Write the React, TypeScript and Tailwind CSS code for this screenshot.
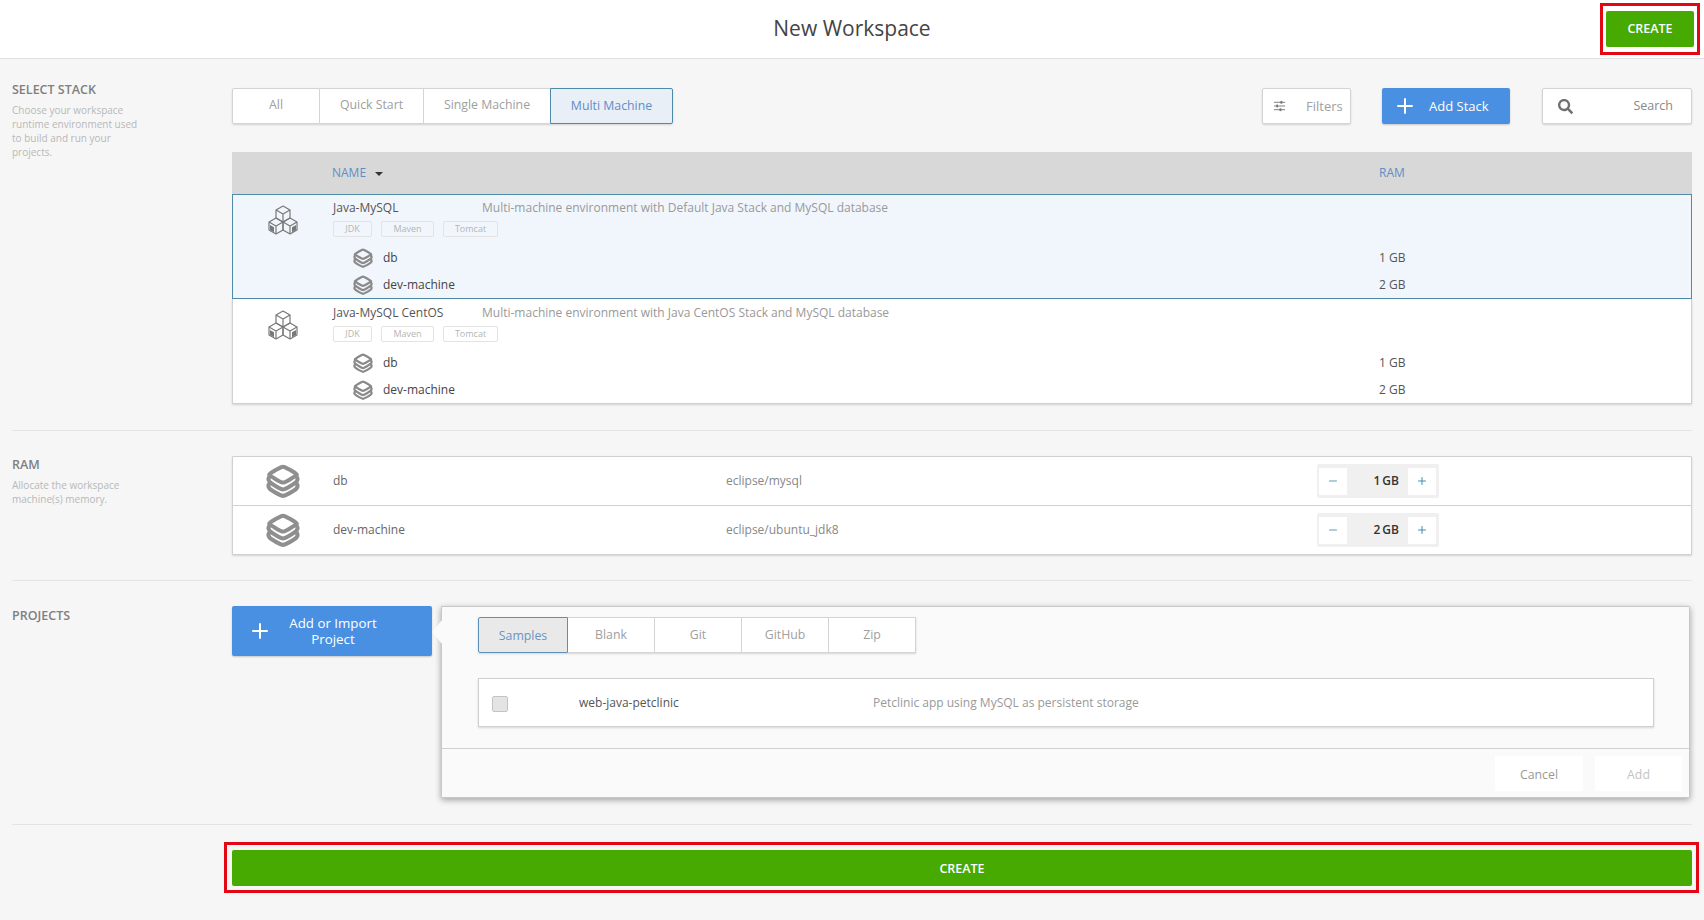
import { Plus, Minus } from "lucide-react";
import { FaSearch } from "react-icons/fa";

const CubesIcon = () => (
  <svg viewBox="0 0 32 32" className="w-[32px] h-[32px] text-[#787878]" fill="none" stroke="currentColor" strokeWidth="1.200" strokeLinejoin="round">
    <path d="M16 2l7 4v8l-7 4-7-4V6z" />
    <path d="M9 6l7 4 7-4M16 10v8" />
    <path d="M9 14l7 4v8l-7 4-7-4v-8z" />
    <path d="M2 18l7 4 7-4M9 22v8" />
    <path d="M23 14l7 4v8l-7 4-7-4v-8z" />
    <path d="M16 18l7 4 7-4M23 22v8" />
    <path d="M3 21l4 2.300v5l-4-2.300zM29 21l-4 2.300v5l4-2.300z" fill="currentColor" stroke="none" />
  </svg>
);

const StackIcon = ({ big }: { big?: boolean }) => (
  <svg viewBox="0 0 32 32" className={big ? "w-[34px] h-[34px] text-[#8f8f8f]" : "w-[20px] h-[20px] text-[#8a8a8a]"} fill="none" stroke="currentColor" strokeWidth={big ? 3.8 : 3.6} strokeLinejoin="round" strokeLinecap="round">
    <path d="M16 2.500C18 2.500 27 8 29 10C27 12 18 17.500 16 17.500C14 17.500 5 12 3 10C5 8 14 2.500 16 2.500z" />
    <path d="M3.500 11.500C1.800 13.500 1.800 15 3.500 16.800C5.500 18.800 14 24 16 24C18 24 26.500 18.800 28.500 16.800C30.200 15 30.200 13.500 28.500 11.500" />
    <path d="M3.500 18C1.800 20 1.800 21.500 3.500 23.300C5.500 25.300 14 30 16 30C18 30 26.500 25.300 28.500 23.300C30.200 21.500 30.200 20 28.500 18" />
  </svg>
);

const FilterIcon = () => (
  <svg viewBox="0 0 14 12" className="w-[13px] h-[12px] text-[#777]" fill="currentColor">
    <rect x="1" y="1.500" width="12" height="1" />
    <rect x="1" y="5.500" width="12" height="1" />
    <rect x="1" y="9.500" width="12" height="1" />
    <rect x="8" y="0.500" width="2" height="3" />
    <rect x="3.500" y="4.500" width="2" height="3" />
    <rect x="7" y="8.500" width="2" height="3" />
  </svg>
);

const stackTabs = [
  { label: "All", w: "w-[88px]" },
  { label: "Quick Start", w: "w-[104px]" },
  { label: "Single Machine", w: "w-[127px]" },
];

const sourceTabs = ["Blank", "Git", "GitHub", "Zip"];

const stacks = [
  { name: "Java-MySQL", desc: "Multi-machine environment with Default Java Stack and MySQL database", selected: true },
  { name: "Java-MySQL CentOS", desc: "Multi-machine environment with Java CentOS Stack and MySQL database", selected: false },
];

const machines = [
  { name: "db", image: "eclipse/mysql", ram: "1 GB" },
  { name: "dev-machine", image: "eclipse/ubuntu_jdk8", ram: "2 GB" },
];

const StackRow = ({ name, desc, selected }: { name: string; desc: string; selected: boolean }) => (
  <div className={selected ? "h-[105px] border border-[#4e8ba8] bg-[#f1f6fc] -mt-px relative" : "h-[105px] pt-px bg-white border-x border-b border-[#d0d0d0] shadow-[0_1px_2px_rgba(0,0,0,0.15)]"}>
    <div className="flex h-[49px]">
      <div className="w-[100px] flex justify-center pt-[9px] shrink-0">
        <CubesIcon />
      </div>
      <div className="flex-1">
        <div className="flex h-[25px] items-center text-[12px]">
          <div className="w-[149px] text-[#555]">{name}</div>
          <div className="text-[#999]">{desc}</div>
        </div>
        <div className="flex gap-[9px] mt-px">
          {["JDK", "Maven", "Tomcat"].map((tag) => (
            <span
              key={tag}
              className={
                (tag === "JDK" ? "w-[39px]" : tag === "Maven" ? "w-[53px]" : "w-[55px]") +
                " h-[16px] flex items-center justify-center border border-[#e3e3e3] rounded-[2px] text-[9px] text-[#b5b5b5]"
              }
            >
              {tag}
            </span>
          ))}
        </div>
      </div>
    </div>
    {machines.map((m) => (
      <div key={m.name} className="flex items-center h-[27px] pl-[120px] text-[12px] text-[#444]">
        <StackIcon />
        <span className="ml-[10px] flex-1">{m.name}</span>
        <span className="w-[312px] text-[#555]">{m.ram}</span>
      </div>
    ))}
  </div>
);

const RamRow = ({ name, image, ram, last }: { name: string; image: string; ram: string; last: boolean }) => (
  <div className={last ? "flex items-center h-[48px]" : "flex items-center h-[49px] border-b border-[#d0d0d0]"}>
    <div className="w-[100px] flex justify-center shrink-0">
      <StackIcon big />
    </div>
    <div className="w-[393px] text-[12px] text-[#666]">{name}</div>
    <div className="w-[591px] text-[12px] text-[#888]">{image}</div>
    <div className="w-[122px] h-[34px] bg-[#f0f0f0] flex items-center justify-between pl-[2px] pr-[3px] rounded-[2px]">
      <button className="w-[28px] h-[27px] bg-white flex items-center justify-center text-[#5a9bbd]">
        <Minus size={12} />
      </button>
      <span className="flex-1 text-right pr-[9px] text-[12px] font-semibold text-[#333] [word-spacing:-1px]">{ram}</span>
      <button className="w-[28px] h-[27px] bg-white flex items-center justify-center text-[#3f8db5]">
        <Plus size={12} />
      </button>
    </div>
  </div>
);

const SideLabel = ({ title, text }: { title: string; text?: string[] }) => (
  <div className="w-[220px] shrink-0">
    <div className="text-[12.500px] font-semibold text-[#808080] leading-[17px]">{title}</div>
    {text && (
      <div className="mt-[5px] text-[10px] leading-[14px] text-[#b8b8b8]">
        {text.map((t) => (
          <div key={t}>{t}</div>
        ))}
      </div>
    )}
  </div>
);

export default function App() {
  return (
    <div className="min-h-[920px] bg-[#f6f6f6] font-['Open_Sans',sans-serif]">
      {/* Header */}
      <div className="relative h-[59px] bg-white border-b border-[#e0e0e0] flex items-center justify-center">
        <h1 className="text-[21px] text-[#444] -mt-[1px]">New Workspace</h1>
        <div className="absolute right-[10px] top-[11px]">
          <button className="w-[88px] h-[36px] pt-px bg-[#47aa00] rounded-[2px] text-white text-[12.500px] font-semibold">CREATE</button>
          <span className="absolute -left-[6px] -right-[6px] -top-[8px] -bottom-[8px] border-[3px] border-[#e30613]" />
        </div>
      </div>

      <div className="px-[12px]">
        {/* Select stack */}
        <div className="flex pt-[22px]">
          <SideLabel title="SELECT STACK" text={["Choose your workspace", "runtime environment used", "to build and run your", "projects."]} />
          <div className="flex-1 pt-[7px]">
            <div className="flex items-start h-[36px]">
              <div className="flex h-[36px] text-[12.300px] text-[#a0a0a0] shadow-[0_1px_2px_rgba(0,0,0,0.15)] rounded-[2px]">
                {stackTabs.map((t, i) => (
                  <div key={t.label} className={t.w + " flex items-center justify-center bg-white border-y border-r border-[#d4d4d4] pb-[1px]" + (i === 0 ? " border-l rounded-l-[2px]" : "")}>
                    {t.label}
                  </div>
                ))}
                <div className="w-[123px] flex items-center justify-center bg-[#e8eff7] border border-[#4e8ba8] -ml-px pt-[1px] text-[#5f8ec4] rounded-r-[2px]">Multi Machine</div>
              </div>
              <div className="ml-auto flex items-center">
                <div className="w-[89px] h-[36px] bg-white border border-[#d4d4d4] rounded-[2px] shadow-[0_1px_2px_rgba(0,0,0,0.15)] flex items-center pl-[10px] text-[13px] text-[#a0a0a0]">
                  <FilterIcon />
                  <span className="ml-[20px] pt-[1px]">Filters</span>
                </div>
                <button className="ml-[31px] w-[128px] h-[36px] bg-[#4a90e2] rounded-[2px] flex items-center text-white text-[13px] shadow-[0_1px_2px_rgba(0,0,0,0.2)]">
                  <Plus size={24} strokeWidth={2} className="ml-[11px]" />
                  <span className="ml-[12px] pt-[1px]">Add Stack</span>
                </button>
                <div className="ml-[32px] w-[150px] h-[36px] bg-white border border-[#d4d4d4] rounded-[2px] shadow-[0_1px_2px_rgba(0,0,0,0.15)] flex items-center justify-between pl-[15px] pr-[18px] text-[12.500px] text-[#888]">
                  <FaSearch size={15} className="text-[#707070]" />
                  <span className="pt-[1px]">Search</span>
                </div>
              </div>
            </div>

            <div className="mt-[28px]">
              <div className="h-[43px] pb-[2px] bg-[#d8d8d8] flex items-center text-[12px] text-[#5f8ec4]">
                <div className="w-[100px]" />
                <span>NAME</span>
                <span className="ml-[9px] mt-[2px] w-0 h-0 border-x-[4px] border-x-transparent border-t-[4px] border-t-[#333]" />
                <span className="ml-auto w-[313px]">RAM</span>
              </div>
              {stacks.map((s) => (
                <StackRow key={s.name} {...s} />
              ))}
            </div>
          </div>
        </div>

        <div className="mt-[26px] border-t border-[#e4e4e4]" />

        {/* RAM */}
        <div className="flex pt-[25px]">
          <SideLabel title="RAM" text={["Allocate the workspace", "machine(s) memory."]} />
          <div className="flex-1 bg-white border border-[#d0d0d0] shadow-[0_1px_2px_rgba(0,0,0,0.15)] rounded-[1px]">
            {machines.map((m, i) => (
              <RamRow key={m.name} {...m} last={i === machines.length - 1} />
            ))}
          </div>
        </div>

        <div className="mt-[25px] border-t border-[#e4e4e4]" />

        {/* Projects */}
        <div className="flex pt-[25px]">
          <div className="pt-[1px]">
            <SideLabel title="PROJECTS" />
          </div>
          <div className="flex-1 flex items-start">
            <button className="w-[200px] h-[50px] bg-[#4a90e2] rounded-[2px] flex items-center text-white text-[13.300px] leading-[16px] shadow-[0_1px_2px_rgba(0,0,0,0.2)] shrink-0">
              <Plus size={24} strokeWidth={2} className="ml-[16px] shrink-0" />
              <span className="w-[110px] ml-[6px] text-center">Add or Import Project</span>
            </button>
            <div className="relative ml-[9px] mr-[2px] flex-1 h-[192px] bg-[#fafafa] border border-[#c8c8c8] rounded-[1px] shadow-[0_2px_6px_rgba(0,0,0,0.35)] flex flex-col">
              <span className="absolute -left-[10px] top-[13px] w-0 h-0 border-y-[12px] border-y-transparent border-r-[10px] border-r-[#fafafa]" />
              <div className="flex-1 pt-[10px] pl-[36px] pr-[35px]">
                <div className="flex h-[36px] text-[12.300px] text-[#a0a0a0] w-fit shadow-[0_1px_2px_rgba(0,0,0,0.15)]">
                  <div className="w-[90px] flex items-center justify-center bg-[#e9e9e9] border border-[#5d8fb8] text-[#6a94c4] rounded-l-[2px] pt-[2px]">Samples</div>
                  {sourceTabs.map((t) => (
                    <div key={t} className="w-[87px] flex items-center justify-center bg-white border-y border-r border-[#d4d4d4]">
                      {t}
                    </div>
                  ))}
                </div>
                <div className="mt-[25px] h-[49px] bg-white border border-[#d0d0d0] shadow-[0_1px_2px_rgba(0,0,0,0.15)] flex items-center text-[12px]">
                  <span className="ml-[13px] mt-[2px] w-[16px] h-[16px] bg-[#e4e4e4] border border-[#c4c4c4] rounded-[2px]" />
                  <span className="ml-[71px] w-[294px] text-[#555]">web-java-petclinic</span>
                  <span className="text-[#999]">Petclinic app using MySQL as persistent storage</span>
                </div>
              </div>
              <div className="h-[49px] border-t border-[#d0d0d0] flex items-center justify-end pr-[7px] gap-[12px] text-[12.300px] shrink-0">
                <div className="w-[88px] h-[35px] bg-white flex items-center justify-center text-[#999] pt-[4px]">Cancel</div>
                <div className="w-[87px] h-[35px] bg-white flex items-center justify-center text-[#c4c4c4] pt-[4px]">Add</div>
              </div>
            </div>
          </div>
        </div>

        <div className="mt-[26px] border-t border-[#e4e4e4]" />

        {/* Bottom create */}
        <div className="pl-[220px] pt-[25px]">
          <div className="relative">
            <button className="w-full h-[36px] pt-[2px] bg-[#47aa00] rounded-[2px] text-white text-[12.500px] font-semibold">CREATE</button>
            <span className="absolute -left-[8px] -right-[7px] -top-[8px] -bottom-[7px] border-[3px] border-[#e30613]" />
          </div>
        </div>
      </div>
    </div>
  );
}
